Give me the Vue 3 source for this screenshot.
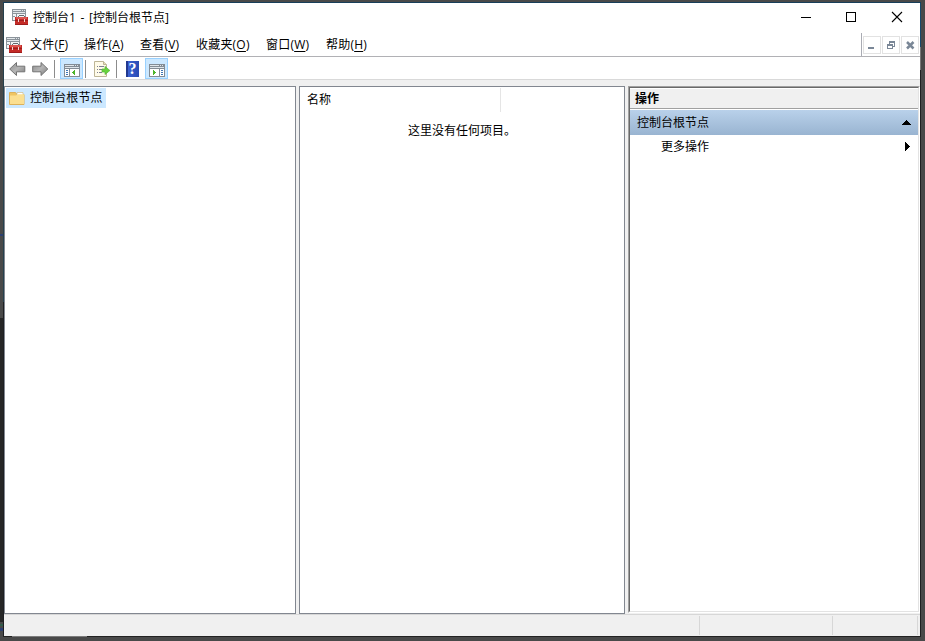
<template>
    <div class="desktop">
        <div class="window">
            <header class="title-bar">
                <svg class="app-icon" width="16" height="16" viewBox="0 0 16 16" shape-rendering="crispEdges">
                    <use href="#toolbox" />
                </svg>
                <span class="title">控制台1 - [控制台根节点]</span>
                <div class="win-buttons">
                    <svg width="46" height="28" viewBox="0 0 46 28">
                        <path d="M18 14.5h10" stroke="#000" />
                    </svg>
                    <svg width="46" height="28" viewBox="0 0 46 28">
                        <rect x="17.5" y="9.5" width="9" height="9" fill="none" stroke="#000" />
                    </svg>
                    <svg width="46" height="28" viewBox="0 0 46 28">
                        <path d="M17 9l10 10M27 9l-10 10" stroke="#000" stroke-width="1.1" />
                    </svg>
                </div>
            </header>

            <nav class="menu-bar">
                <svg class="app-icon" width="16" height="16" viewBox="0 0 16 16" shape-rendering="crispEdges">
                    <symbol id="toolbox" viewBox="0 0 16 16">
                        <path fill="#8c949b" d="M0 0h14v12H0z" />
                        <path fill="#e2e7ea" d="M1 1h8v1H1zM10 1h1v1h-1zM12 1h1v1h-1zM1 3h12v1H1z" />
                        <path fill="#f1f4f6" d="M1 5h12v6H1z" />
                        <path fill="#8c949b" d="M4 5h1v6H4zM1 7h2v1H1z" />
                        <path fill="#66696d" d="M7 6h5v1H7zM6 7h1v1H6zM12 7h1v1h-1z" />
                        <path fill="#c42b27" d="M3 8h13v8H3z" />
                        <path fill="#dc5550" d="M4 8h11v2H4z" />
                        <path fill="#9f1c1c" d="M3 11h13v1H3zM3 15h13v1H3z" />
                        <path fill="#f1d6d2" d="M6 10h1v3H6zM12 10h1v3h-1z" />
                    </symbol>
                    <use href="#toolbox" />
                </svg>
                <ul class="menus">
                    <li v-for="menu in menus" :key="menu.key">{{ menu.label }}(<u>{{ menu.key }}</u>)</li>
                </ul>
                <div class="child-buttons">
                    <span class="child-button">
                        <svg width="16" height="16" viewBox="0 0 16 16" shape-rendering="crispEdges">
                            <path fill="#7a8797" d="M4 10h6v2H4z" />
                        </svg>
                    </span>
                    <span class="child-button">
                        <svg width="16" height="16" viewBox="0 0 16 16" shape-rendering="crispEdges">
                            <path fill="#7a8797" fill-rule="evenodd"
                                d="M6 4h6v6h-2V9h1V6H7v1H6zM4 7h6v5H4zM5 9v2h4V9z" />
                        </svg>
                    </span>
                    <span class="child-button">
                        <svg width="16" height="16" viewBox="0 0 16 16">
                            <path d="M5 5l6.5 6.5M11.5 5L5 11.5" stroke="#7a8797" stroke-width="2.5" />
                        </svg>
                    </span>
                </div>
            </nav>

            <div class="tool-bar">
                <svg class="arrow" width="17" height="14" viewBox="0 0 17 14">
                    <defs>
                        <linearGradient id="metal" x1="0" y1="0" x2="1" y2="1">
                            <stop offset="0" stop-color="#8c8c8c" />
                            <stop offset=".5" stop-color="#b4b4b4" />
                            <stop offset="1" stop-color="#7b7b7b" />
                        </linearGradient>
                    </defs>
                    <path d="M.7 7L7.5.5v3.7h8.3v5.6H7.5v3.7z" fill="url(#metal)" stroke="#737373" />
                </svg>
                <svg class="arrow forward" width="17" height="14" viewBox="0 0 17 14">
                    <path d="M15.8 7L9 .5v3.7H.7v5.6H9v3.7z" fill="url(#metal)" stroke="#737373" />
                </svg>
                <i class="divider"></i>
                <span class="tool active">
                    <svg width="16" height="13" viewBox="0 0 16 13" shape-rendering="crispEdges">
                        <path fill="#838c95" d="M0 0h16v13H0z" />
                        <path fill="#dfe5ea" d="M1 1h9v1H1zM11 1h1v1h-1zM13 1h1v1h-1zM1 3h14v1H1z" />
                        <path fill="#fff" d="M1 5h4v7H1zM6 5h9v7H6z" />
                        <path fill="#3e77b7" d="M2 6h2v1H2zM2 8h2v1H2zM2 10h2v1H2z" />
                        <path fill="#4cb52c" d="M11 6v5h-1v-1H9V9H8V8h1V7h1V6z" />
                    </svg>
                </span>
                <i class="divider"></i>
                <svg class="export" width="17" height="16" viewBox="0 0 17 16">
                    <path d="M.5.5h9l3 3v12H.5z" fill="#fffbe9" stroke="#bdb596" />
                    <path d="M9.5.5v3h3" fill="#e8dfb8" stroke="#bdb596" />
                    <path d="M3 5.5h1M3 8.5h1M3 11.5h1M5 5.5h5M5 8.5h3M5 11.5h3" stroke="#7d7f93" />
                    <path d="M8 8h3V5.4L15.9 9.5 11 13.6V11H8z" fill="#67d33c" stroke="#58b53a" stroke-width=".7" />
                </svg>
                <i class="divider"></i>
                <span class="help">?</span>
                <span class="tool last-tool active">
                    <svg width="16" height="13" viewBox="0 0 16 13" shape-rendering="crispEdges">
                        <path fill="#838c95" d="M0 0h16v13H0z" />
                        <path fill="#dfe5ea" d="M1 1h9v1H1zM11 1h1v1h-1zM13 1h1v1h-1zM1 3h14v1H1z" />
                        <path fill="#fff" d="M1 5h9v7H1zM11 5h4v7h-4z" />
                        <path fill="#3e77b7" d="M12 6h2v1h-2zM12 8h2v1h-2zM12 10h2v1h-2z" />
                        <path fill="#4cb52c" d="M4 6v5h1v-1h1V9h1V8H6V7H5V6z" />
                    </svg>
                </span>
            </div>

            <main class="panes">
                <section class="pane tree">
                    <div class="tree-node">
                        <svg width="16" height="14" viewBox="0 0 16 14">
                            <path d="M.5 1.5h6l1.5 2h7v10H.5z" fill="#efc563" stroke="#dcb15a" />
                            <path d="M8 1.5h6v3H8z" fill="#fff" stroke="#cbb47b" stroke-width=".6" />
                            <path d="M1 4.5h6l1.5-1.2H15V13H1z" fill="#fbdf91" />
                        </svg>
                        <span>{{ rootName }}</span>
                    </div>
                </section>
                <section class="pane list">
                    <div class="list-header">
                        <span class="column">名称</span>
                    </div>
                    <p class="empty">这里没有任何项目。</p>
                </section>
                <section class="actions">
                    <div class="actions-inner">
                        <h2>操作</h2>
                        <div class="group">
                            <span>{{ rootName }}</span>
                            <svg width="9" height="5" viewBox="0 0 9 5" shape-rendering="crispEdges">
                                <path d="M4 0h1v1h1v1h1v1h1v1h1v1H0V4h1V3h1V2h1V1h1z" />
                            </svg>
                        </div>
                        <div class="action">
                            <span>更多操作</span>
                            <svg width="5" height="9" viewBox="0 0 5 9" shape-rendering="crispEdges">
                                <path d="M0 0h1v1h1v1h1v1h1v1h1v1H4v1H3v1H2v1H1v1H0z" />
                            </svg>
                        </div>
                    </div>
                </section>
            </main>

            <footer class="status-bar">
                <span class="cell wide"></span>
                <span class="cell middle"></span>
                <span class="cell last"></span>
            </footer>
        </div>
    </div>
</template>

<script setup>
import { ref } from "vue";

const rootName = ref("控制台根节点");

const menus = ref([
    { label: "文件", key: "F" },
    { label: "操作", key: "A" },
    { label: "查看", key: "V" },
    { label: "收藏夹", key: "O" },
    { label: "窗口", key: "W" },
    { label: "帮助", key: "H" },
]);
</script>

<style>
body {
    margin: 0;
    overflow: hidden;
}
</style>

<style scoped>
* {
    box-sizing: border-box;
}

svg {
    display: block;
    flex: none;
}

/* the window border is transparent, its colours come from these strips */
.desktop {
    width: 925px;
    height: 641px;
    padding: 2px 4px 4px 3px;
    background:
        linear-gradient(#7c7c7c, #7c7c7c) 12px 636px / 75px 1px no-repeat,
        linear-gradient(#222, #222) 3px 636px / 918px 1px no-repeat,
        linear-gradient(#173f5b, #173f5b) 3px 2px / 918px 1px no-repeat,
        linear-gradient(#17486b 0 45px, #777 45px 68px, #1f2022 68px) 920px 2px / 1px 635px no-repeat,
        linear-gradient(#26404c 0 300px, #1d1f22 300px) 3px 2px / 1px 635px no-repeat,
        linear-gradient(#2f5d4a, #2f5d4a) 0 624px / 3px 2px no-repeat,
        linear-gradient(#2b3f73, #2b3f73) 0 628px / 3px 3px no-repeat,
        linear-gradient(#2b3f73, #2b3f73) 0 234px / 3px 2px no-repeat,
        linear-gradient(#262626, #262626) 0 318px / 3px 304px no-repeat,
        #494949;
    font-family: "Open Sans", "Noto Sans CJK SC", sans-serif;
    font-size: 12px;
    line-height: 18px;
    color: #000;
}

.window {
    display: flex;
    flex-direction: column;
    width: 918px;
    height: 635px;
    border: 1px solid transparent;
    background: #fff;
    background-clip: padding-box;
}

.title-bar {
    display: flex;
    height: 30px;
    padding-left: 8px;
}

.title-bar .app-icon {
    margin-top: 6px;
}

.title {
    margin: 6px 0 0 5px;
    white-space: nowrap;
    word-spacing: 1.5px;
}

.win-buttons {
    display: flex;
    margin-right: -1px;
    margin-left: auto;
}

.menu-bar {
    display: flex;
    height: 24px;
    padding-left: 2px;
    border-bottom: 1px solid #b1b1b5;
}

.menu-bar .app-icon {
    margin-top: 4px;
}

.menus {
    display: grid;
    grid-template-columns: 54px 56px 56px 70px 60px 44px;
    margin: 3px 0 0 8px;
    padding: 0;
    list-style: none;
    white-space: nowrap;
}

.menus li {
    letter-spacing: 0.2px;
}

.menus u {
    text-underline-offset: 2px;
}

.child-buttons {
    display: flex;
    gap: 1px;
    margin-left: auto;
    padding: 3px 1px 0 1px;
    border-left: 1px solid #a9abb3;
}

.child-button {
    width: 18px;
    height: 18px;
    border: 1px solid #e2e2e2;
}

.tool-bar {
    display: flex;
    align-items: flex-start;
    height: 23px;
    border-bottom: 1px solid #d9d9d9;
}

.arrow {
    margin: 5px 0 0 5px;
}

.arrow.forward {
    margin-left: 6px;
}

.divider {
    width: 1px;
    height: 18px;
    margin: 3px 0 0 5px;
    background: #8c8c8c;
}

.tool {
    width: 23px;
    height: 21px;
    margin: 1px 0 0 5px;
    padding: 5px 0 0 3px;
}

.tool.active {
    border: 1px solid #99d1ff;
    background: #cce8ff;
}

.tool.last-tool {
    margin-left: 6px;
}

.tool + .divider {
    margin-left: 2px;
}

.export {
    margin: 4px 0 0 8px;
}

.help {
    width: 13px;
    height: 16px;
    margin: 4px 0 0 9px;
    background: linear-gradient(90deg, #22398f 0 2px, #3b61d2 2px, #294ab3);
    color: #fff;
    font: bold 16px/16px "Liberation Serif", serif;
    text-align: center;
}

.panes {
    display: flex;
    flex: 1;
    padding-top: 6px;
    background: #f0f0f0;
}

.pane {
    height: 528px;
    border: 1px solid #828790;
    background: #fff;
}

.tree {
    width: 292px;
}

.tree-node {
    display: flex;
    align-items: center;
    width: 100px;
    height: 20px;
    margin: 1px 0 0 1px;
    padding-left: 3px;
    background: #cce8ff;
    white-space: nowrap;
}

.tree-node span {
    margin-left: 5px;
    letter-spacing: 0.1px;
}

.list {
    width: 326px;
    margin-left: 3px;
}

.list-header {
    display: flex;
    height: 25px;
    padding-top: 1px;
}

.column {
    width: 201px;
    height: 24px;
    padding: 3px 0 0 7px;
    border-right: 1px solid #e5e5e5;
}

.empty {
    margin: 10px 0 0 108px;
}

.actions {
    width: 292px;
    height: 527px;
    margin-left: 3px;
    border: 1px solid #a0a0a0;
    border-right-color: #fff;
    border-bottom-color: #fff;
}

.actions-inner {
    height: 525px;
    border: 1px solid #696969;
    border-right-color: #e3e3e3;
    border-bottom-color: #e3e3e3;
    background: #fff;
}

.actions h2 {
    height: 21px;
    margin: 0;
    padding: 1px 0 0 5px;
    border-top: 1px solid #fff;
    border-bottom: 1px solid #a0a0a0;
    background: #f0f0f0;
    font-size: 12px;
    font-weight: bold;
    line-height: 18px;
}

.group {
    display: flex;
    align-items: center;
    justify-content: space-between;
    height: 25px;
    margin-top: 1px;
    padding: 0 7px;
    background: linear-gradient(#b9d1ea, #99b4d1);
}

.action {
    display: flex;
    align-items: center;
    justify-content: space-between;
    height: 23px;
    padding: 0 8px 0 31px;
}

.status-bar {
    display: flex;
    height: 22px;
    padding: 1px 2px 1px 0;
    border-top: 1px solid #d7d7d7;
    background: #f0f0f0;
}

.cell {
    border-right: 1px solid #d7d7d7;
}

.wide {
    width: 696px;
}

.middle {
    width: 133px;
}

.last {
    flex: 1;
}
</style>
